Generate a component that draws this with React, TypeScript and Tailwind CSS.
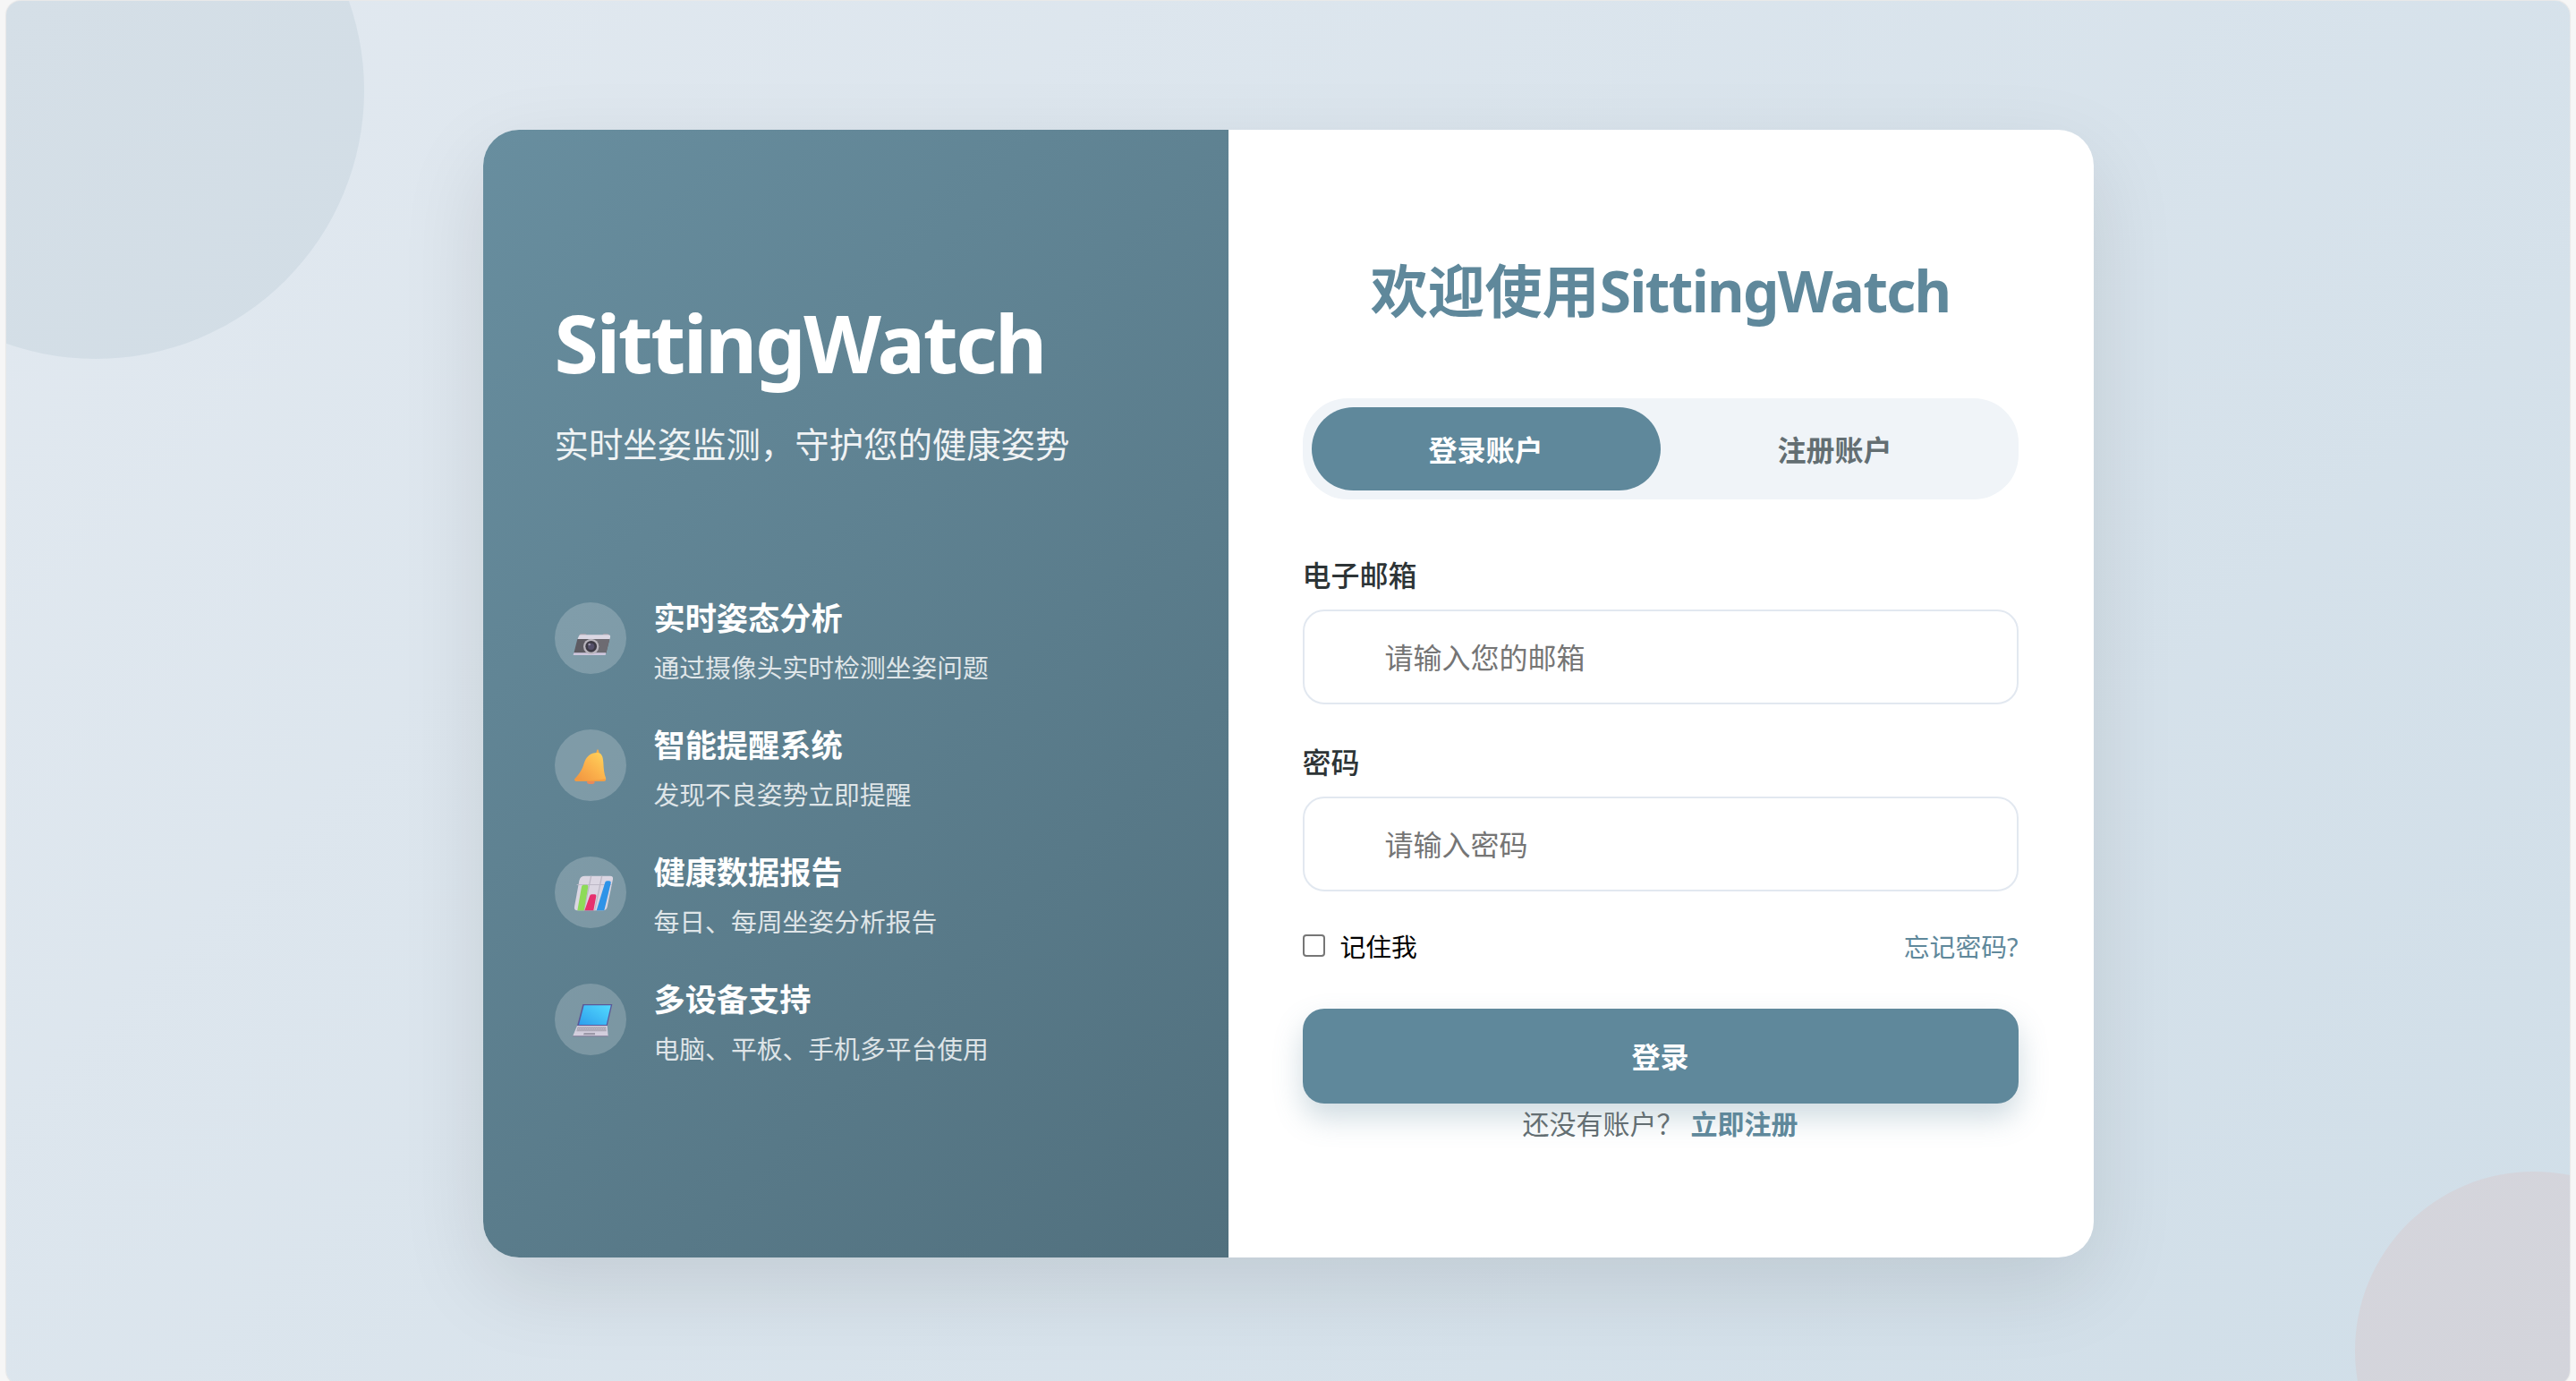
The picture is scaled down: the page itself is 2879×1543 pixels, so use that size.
const FONT = "font-['Noto_Sans','Noto_Sans_CJK_SC',sans-serif]";

// Icons are drawn in a 180x150 box centred on the 80px circle
function CameraIcon() {
  return (
    <svg width="60" height="50" viewBox="0 0 180 150">
      <path d="M52 66q2-6 8-6h12q4 0 5 6zM130 66q1-6 6-6h10q5 0 6 6z" fill="#a7a3ad" />
      <path d="M56 64h94q8 0 6 8l-2 8H46l4-10q2-6 6-6z" fill="#dcd8e4" />
      <path d="M46 78h108l-12 48H34z" fill="#5d5b62" />
      <path d="M100 78h54l-12 48h-30z" fill="#6d6b72" />
      <path d="M34 124h108l-2 8H32z" fill="#cdc6dc" />
      <circle cx="92" cy="103" r="26" fill="#b9b5bd" />
      <circle cx="92" cy="103" r="19" fill="#3d3a45" />
      <circle cx="92" cy="103" r="11" fill="#55506a" />
      <circle cx="86" cy="96" r="4" fill="#9a94aa" />
    </svg>
  );
}

function BellIcon() {
  return (
    <svg width="60" height="50" viewBox="0 0 180 150">
      <defs>
        <linearGradient id="bellBody" x1="0" y1="1" x2="1" y2="0">
          <stop offset="0" stopColor="#f0923f" />
          <stop offset=".5" stopColor="#fbb24c" />
          <stop offset="1" stopColor="#ffd65c" />
        </linearGradient>
      </defs>
      <ellipse cx="91" cy="132" rx="13" ry="6" fill="#e98a5a" />
      <path d="M108 36l4-13q2-2 4 0l4 13z" fill="#f5ac48" />
      <path d="M112 33c16 0 20 14 21 34 1 22 3 38 8 50 2 8-1 11-7 11H44c-7 0-10-4-6-9 16-16 24-30 30-50 6-22 22-36 44-36z" fill="url(#bellBody)" />
      <path d="M38 122c30 5 70 5 102-1 2 6-1 7-6 7H44c-5 0-8-2-6-6z" fill="#f49c42" />
    </svg>
  );
}

function ChartIcon() {
  return (
    <svg width="60" height="50" viewBox="0 0 180 150">
      <path d="M72 20h84q11 0 9 11l-19 93q-3 12-14 12H46q-12 0-10-12l16-88q3-16 20-16z" fill="#dbd6e2" />
      <path d="M90 20h4l-24 116h-4zM126 20h4l-24 116h-4zM44 48h118v3H44z" fill="#bdb8c6" />
      <path d="M60 56q1-6 7-6h10q6 0 5 6L68 136H46z" fill="#8edb58" />
      <path d="M87 88q1-6 7-6h10q6 0 5 6l-9 48H70z" fill="#e6306e" />
      <path d="M138 44q1-7 8-7h6q7 0 6 7l-22 92h-26z" fill="#2e93e8" />
    </svg>
  );
}

function LaptopIcon() {
  return (
    <svg width="60" height="50" viewBox="0 0 180 150">
      <defs>
        <linearGradient id="lapScreen" x1="0" y1="1" x2="1" y2="0">
          <stop offset="0" stopColor="#2e9eec" />
          <stop offset="1" stopColor="#52daff" />
        </linearGradient>
      </defs>
      <path d="M64 24h99l-17 73H45z" fill="#5b5798" />
      <path d="M68 28h90l-15 65H51z" fill="url(#lapScreen)" />
      <path d="M45 96h101l3 36H30z" fill="#d3cedd" />
      <path d="M47 100h94l2 15H43z" fill="#a8a4b2" />
      <path d="M50 103h88M48 107h92M46 111h95" stroke="#dcd8e2" strokeWidth="1.500" strokeDasharray="3 3" />
      <path d="M68 120h37v7H66z" fill="#9c98a8" />
      <path d="M30 130h119v3H30z" fill="#7d7795" />
    </svg>
  );
}

const features = [
  { icon: <CameraIcon />, title: "实时姿态分析", desc: "通过摄像头实时检测坐姿问题" },
  { icon: <BellIcon />, title: "智能提醒系统", desc: "发现不良姿势立即提醒" },
  { icon: <ChartIcon />, title: "健康数据报告", desc: "每日、每周坐姿分析报告" },
  { icon: <LaptopIcon />, title: "多设备支持", desc: "电脑、平板、手机多平台使用" },
];

export default function App() {
  return (
    <div className={`h-[1543px] w-full overflow-hidden bg-[#f6f6f6] pt-px px-[7px] ${FONT}`}>
      <div className="relative flex h-[1546px] items-start justify-center overflow-hidden rounded-[16px] bg-[linear-gradient(135deg,#e2e9f0,#d0dee8)] pt-[144px] shadow-[0_0_2px_rgba(0,0,0,0.2)]">
        {/* Background circles */}
        <div className="absolute left-[-200px] top-[-200px] h-[600px] w-[600px] rounded-full bg-[rgba(96,137,154,0.1)]" />
        <div className="absolute bottom-[-162px] right-[-160px] h-[400px] w-[400px] rounded-full bg-[rgba(255,100,80,0.08)]" />

        {/* Card */}
        <div className="relative flex h-[1260px] w-[1800px] overflow-hidden rounded-[40px] bg-white shadow-[0_32px_96px_rgba(0,0,0,0.1)]">
          {/* Brand panel */}
          <div className="flex w-[833px] flex-col bg-[linear-gradient(135deg,#688e9f,#51707e)] px-20 pt-[183px] text-white">
            <h1 className="text-[89.6px] leading-[108px] font-bold tracking-[-0.027em]">SittingWatch</h1>
            <p className="mt-[35px] text-[38.4px] leading-[50px] opacity-90">实时坐姿监测，守护您的健康姿势</p>
            <div className="mt-[139px] flex flex-col gap-[37px]">
              {features.map((f) => (
                <div key={f.title} className="flex items-center gap-[31px]">
                  <div className="flex h-20 w-20 shrink-0 items-center justify-center rounded-full bg-white/20">{f.icon}</div>
                  <div className="mt-[7px]">
                    <h3 className="text-[35.2px] leading-[46px] font-bold">{f.title}</h3>
                    <p className="mt-[14px] text-[28.8px] leading-[38px] opacity-80">{f.desc}</p>
                  </div>
                </div>
              ))}
            </div>
          </div>

          {/* Form panel */}
          <div className="flex flex-1 flex-col pl-[83px] pr-[84px] pt-[130px]">
            <h2 className="text-center text-[64px] leading-[100px] font-bold text-[#5f889b]">
              欢迎使用<span className="tracking-[-0.027em]">SittingWatch</span>
            </h2>
            <div className="mt-[70px] flex h-[113px] rounded-[50px] bg-[#f0f4f8] p-[10px]">
              <button className="flex-1 rounded-[50px] bg-[#5f889b] pt-[2px] text-[32px] font-bold text-white">登录账户</button>
              <button className="flex-1 rounded-[50px] pt-[2px] text-[32px] font-bold text-[#636e72]">注册账户</button>
            </div>
            <label className="mt-[64px] block text-[32px] leading-[42px] font-medium text-[#2d3436]">电子邮箱</label>
            <input
              placeholder="请输入您的邮箱"
              className="mt-[17px] h-[106px] w-full rounded-[24px] border-2 border-[#e2e8f0] pl-[90px] text-[32px] placeholder:text-[#757575]"
            />
            <label className="mt-[44px] block text-[32px] leading-[42px] font-medium text-[#2d3436]">密码</label>
            <input
              placeholder="请输入密码"
              className="mt-[17px] h-[106px] w-full rounded-[24px] border-2 border-[#e2e8f0] pl-[90px] text-[32px] placeholder:text-[#757575]"
            />
            <div className="mt-[43px] flex items-center justify-between text-[28.8px] leading-[38px]">
              <label className="flex items-center gap-[17px] text-black">
                <input type="checkbox" className="-mt-[4px] h-[25px] w-[25px] appearance-none rounded-[4px] border-2 border-[#767676] bg-white" />
                记住我
              </label>
              <a className="text-[#5f889b]">忘记密码?</a>
            </div>
            <button className="mt-[50px] h-[106px] w-full rounded-[24px] bg-[#5f889b] pt-[2px] text-[32px] font-bold text-white shadow-[0_16px_32px_rgba(96,137,154,0.3)]">登录</button>
            <p className="text-center text-[30px] leading-[46px] text-[#636e72]">
              还没有账户？ <a className="font-bold text-[#5f889b]">立即注册</a>
            </p>
          </div>
        </div>
      </div>
    </div>
  );
}
